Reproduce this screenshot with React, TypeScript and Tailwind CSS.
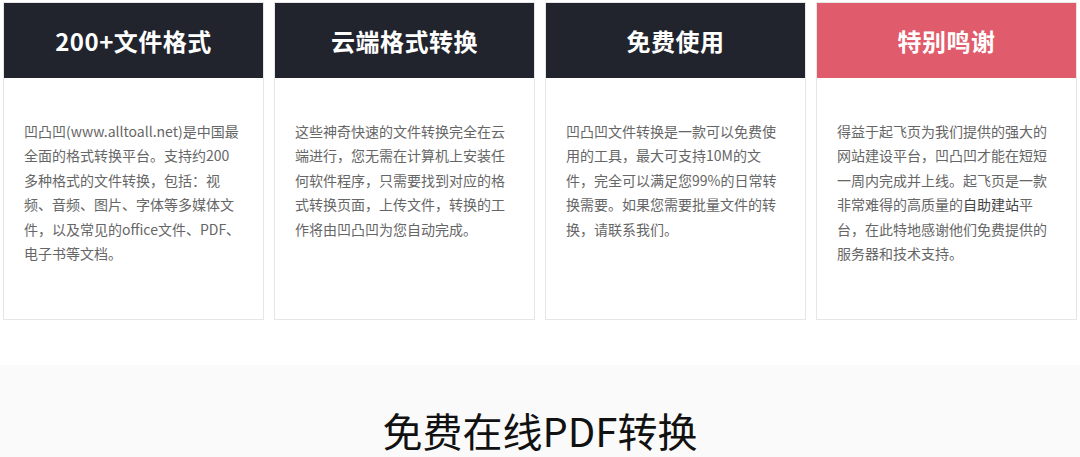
import React from 'react'

type Card = {
  title: string
  head: string
  body: React.ReactNode
}

const cards: Card[] = [
  {
    title: '200+文件格式',
    head: 'bg-[#21242d]',
    body: '凹凸凹(www.alltoall.net)是中国最全面的格式转换平台。支持约200多种格式的文件转换，包括：视频、音频、图片、字体等多媒体文件，以及常见的office文件、PDF、电子书等文档。',
  },
  {
    title: '云端格式转换',
    head: 'bg-[#21242d]',
    body: '这些神奇快速的文件转换完全在云端进行，您无需在计算机上安装任何软件程序，只需要找到对应的格式转换页面，上传文件，转换的工作将由凹凸凹为您自动完成。',
  },
  {
    title: '免费使用',
    head: 'bg-[#21242d]',
    body: '凹凸凹文件转换是一款可以免费使用的工具，最大可支持10M的文件，完全可以满足您99%的日常转换需要。如果您需要批量文件的转换，请联系我们。',
  },
  {
    title: '特别鸣谢',
    head: 'bg-[#e05b6b]',
    body: (
      <>
        得益于起飞页为我们提供的强大的网站建设平台，凹凸凹才能在短短一周内完成并上线。起飞页是一款非常难得的高质量的
        <span className="text-[#444]">自助建站</span>
        平台，在此特地感谢他们免费提供的服务器和技术支持。
      </>
    ),
  },
]

export default function App() {
  return (
    <div className="w-[1080px] h-[457px] overflow-hidden bg-white font-['Noto_Sans_CJK_SC','Noto_Sans',sans-serif]">
      {/* Feature cards */}
      <div className="flex gap-[10px] px-[3px] pt-[2px]">
        {cards.map((card) => (
          <div
            key={card.title}
            className="w-[261px] border border-[#e6e6e6] bg-white"
          >
            <div
              className={`h-[75px] flex items-center justify-center ${card.head}`}
            >
              <h3 className="text-[24px] font-bold text-white tracking-[0.5px]">
                {card.title}
              </h3>
            </div>
            <div className="h-[241px] px-[20px] pt-[41px]">
              <p className="text-[14px] leading-[24.4px] text-[#666]">
                {card.body}
              </p>
            </div>
          </div>
        ))}
      </div>

      {/* Section heading */}
      <div className="mt-[45px] bg-[#fafafa] pt-[36px] h-[200px]">
        <h2 className="text-center text-[40px] leading-[58px] text-[#111]">
          免费在线PDF转换
        </h2>
      </div>
    </div>
  )
}
